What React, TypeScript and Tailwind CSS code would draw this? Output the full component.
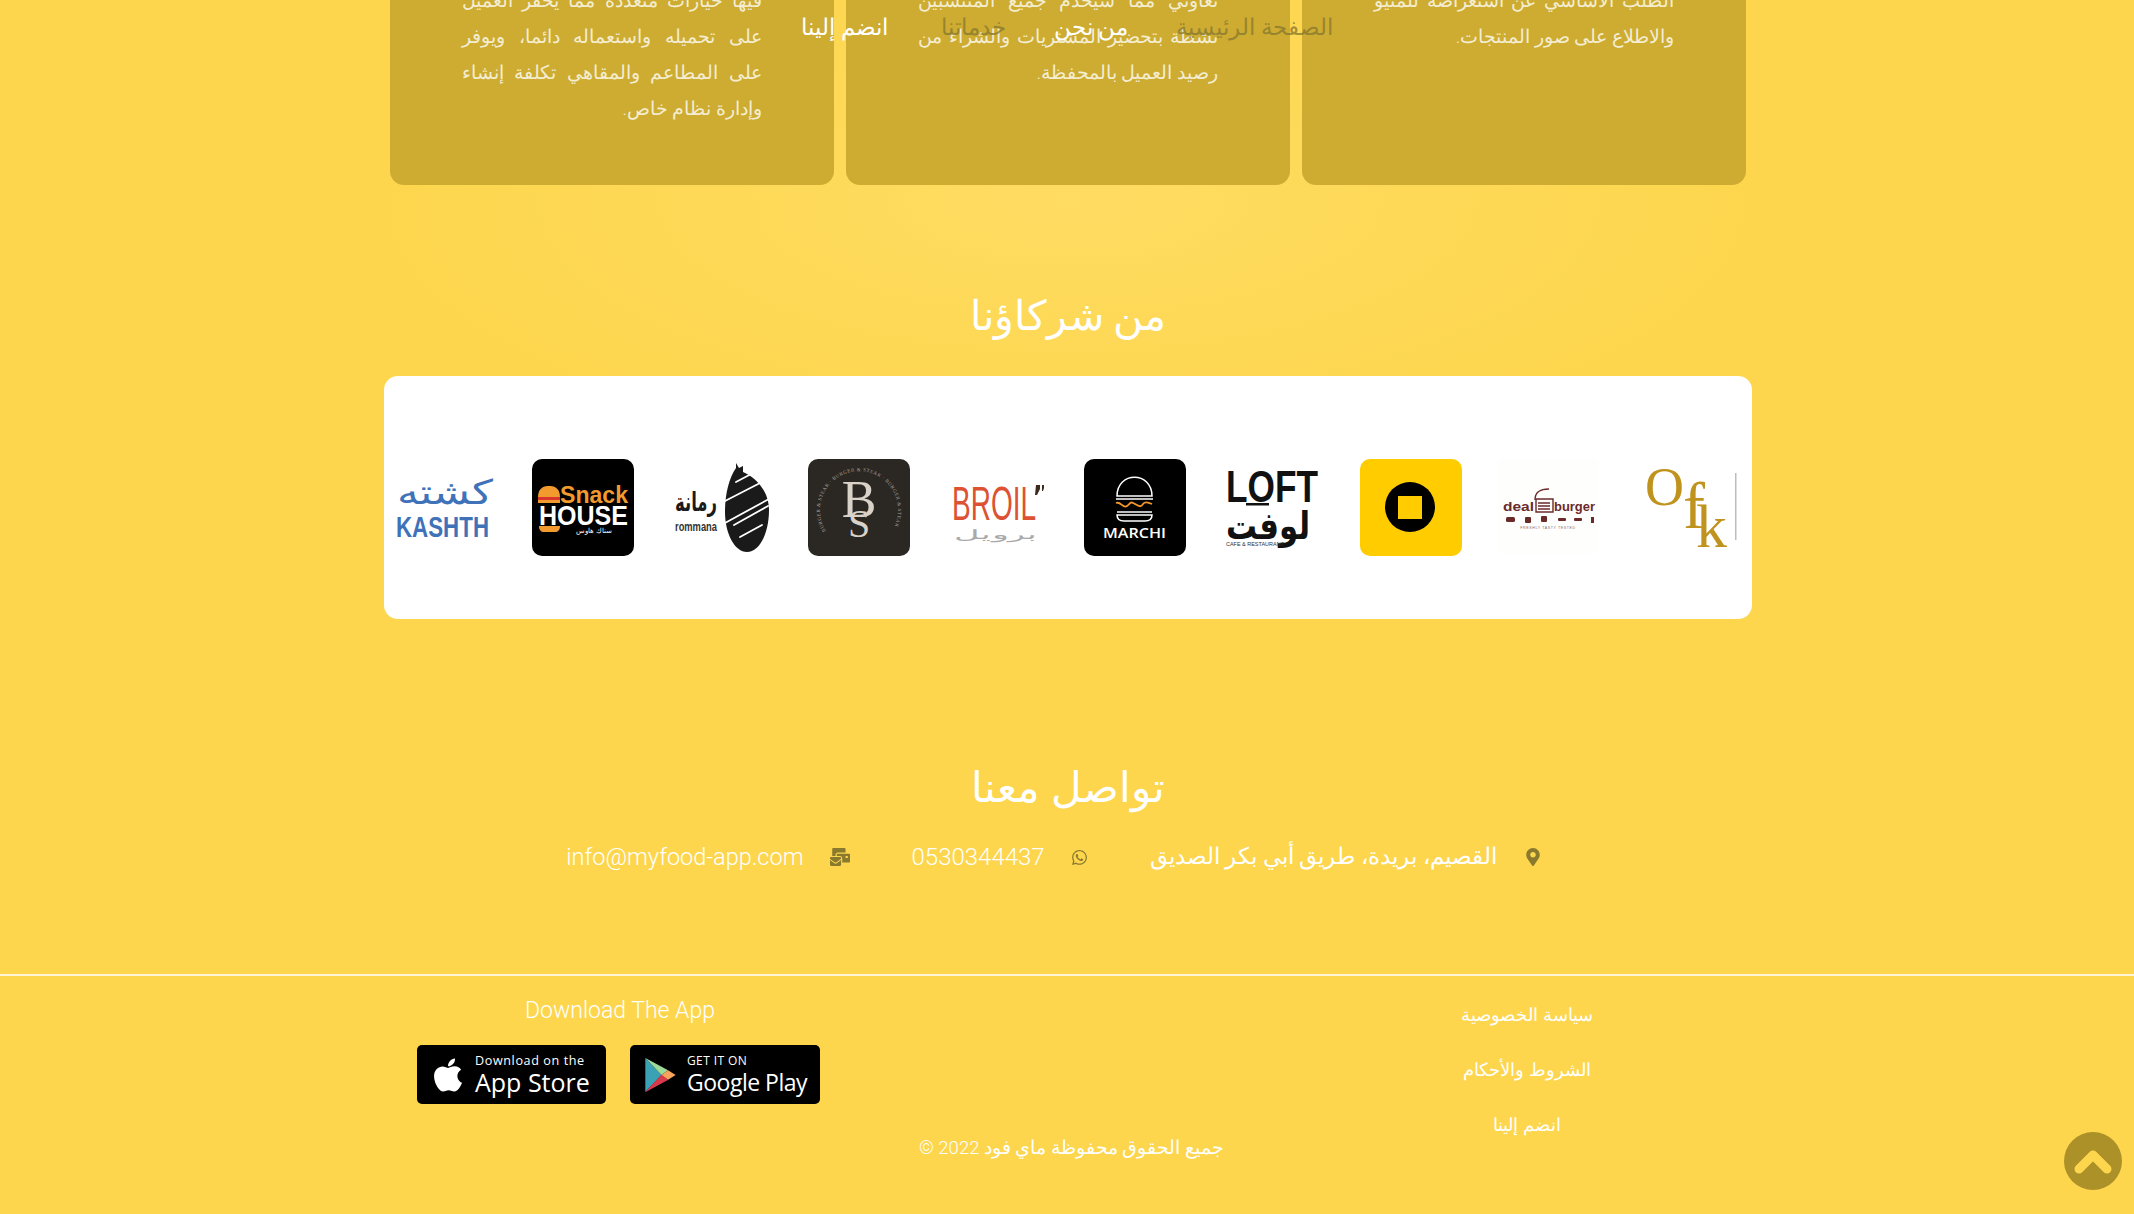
import { FaApple, FaMailBulk, FaMapMarkerAlt, FaWhatsapp } from "react-icons/fa";

const navItems = [
    { label: "الصفحة الرئيسية", active: false },
    { label: "من نحن", active: true },
    { label: "خدماتنا", active: false },
    { label: "انضم إلينا", active: true },
];

const cards = [
    ["الطلب الأساسي عن استعراضه للمنيو", "والاطلاع على صور المنتجات."],
    ["تعاوني مما سيخدم جميع المنتسبين", "نشطة بتحضير المشتريات والشراء من", "رصيد العميل بالمحفظة."],
    ["فيها خيارات متعددة مما يحفز العميل", "على تحميله واستعماله دائما، ويوفر", "على المطاعم والمقاهي تكلفة إنشاء", "وإدارة نظام خاص."],
];

const footerLinks = ["سياسة الخصوصية", "الشروط والأحكام", "انضم إلينا"];

function Kashth() {
    return (
        <svg viewBox="0 0 102 97" className="h-full w-full">
            <text x="51" y="45" textAnchor="middle" fontSize="34" fill="#3f72b8" fontFamily="DejaVu Sans" textLength="96" lengthAdjust="spacingAndGlyphs">كشته</text>
            <text x="2" y="78" fontSize="30" fontWeight="700" fill="#3f72b8" fontFamily="Liberation Sans" textLength="93" lengthAdjust="spacingAndGlyphs">KASHTH</text>
        </svg>
    );
}

function SnackHouse() {
    return (
        <svg viewBox="0 0 102 97" className="h-full w-full">
            <rect width="102" height="97" rx="10" fill="#000" />
            <path d="M6 38c0-10 7-11 11-11s11 1 11 11z" fill="#f29a2e" />
            <rect x="6" y="38" width="22" height="3" fill="#d9352a" />
            <rect x="6" y="41" width="22" height="3" fill="#f29a2e" />
            <text x="28" y="44" fontSize="24" fontWeight="700" fill="#f29a2e" fontFamily="Liberation Sans" textLength="68" lengthAdjust="spacingAndGlyphs">Snack</text>
            <text x="7" y="66" fontSize="28" fontWeight="700" fill="#fff" fontFamily="Liberation Sans" textLength="89" lengthAdjust="spacingAndGlyphs">HOUSE</text>
            <path d="M7 67h21c0 4-2 6-5 6H12c-3 0-5-2-5-6z" fill="#f29a2e" />
            <text x="62" y="74" textAnchor="middle" fontSize="6.5" fill="#fff" fontFamily="DejaVu Sans">سناك هاوس</text>
        </svg>
    );
}

function Rommana() {
    return (
        <svg viewBox="0 0 102 97" className="h-full w-full">
            <text x="26" y="52" textAnchor="middle" fontSize="26" fontWeight="700" fill="#1a1a1a" fontFamily="DejaVu Sans" textLength="42" lengthAdjust="spacingAndGlyphs">رمانة</text>
            <text x="5" y="72" fontSize="12" fontWeight="700" fill="#333" fontFamily="Liberation Sans" textLength="42" lengthAdjust="spacingAndGlyphs">rommana</text>
            <path d="M66 4l3 5 4-2 0 6c14 6 26 20 26 38 0 24-10 42-22 42-12 0-22-18-22-40 0-18 4-34 11-44z" fill="#1a1a1a" />
            <g stroke="#fff" strokeWidth="1.8" strokeLinecap="round">
                <path d="M66 23l17-9" />
                <path d="M55 42l37-19" />
                <path d="M55 64l44-24" />
                <path d="M64 66l34-19" />
                <path d="M70 78l22-12" />
            </g>
        </svg>
    );
}

function BurgerSteak() {
    return (
        <svg viewBox="0 0 102 97" className="h-full w-full">
            <rect width="102" height="97" rx="10" fill="#2b2723" />
            <path id="bs-ring" d="M18 72A39 39 0 1 1 84 72" fill="none" />
            <text fontSize="5" fill="#a8a29a" fontFamily="Liberation Serif" letterSpacing="0.5">
                <textPath href="#bs-ring">BURGER &amp; STEAK · BURGER &amp; STEAK · BURGER &amp; STEAK</textPath>
            </text>
            <text x="51" y="58" textAnchor="middle" fontSize="52" fill="#d8d2c8" fontFamily="Liberation Serif">B</text>
            <text x="51" y="78" textAnchor="middle" fontSize="40" fill="#d8d2c8" fontFamily="Liberation Serif">S</text>
        </svg>
    );
}

function Broil() {
    return (
        <svg viewBox="0 0 102 97" className="h-full w-full">
            <text x="6" y="61" fontSize="48" fill="#dc5233" fontFamily="Liberation Sans" textLength="84" lengthAdjust="spacingAndGlyphs">BROIL</text>
            <path d="M90 26h4v4l-3 6h-2zM96 26h2v3l-1 3h-1z" fill="#3a2a20" />
            <text x="50" y="80" textAnchor="middle" fontSize="13" fill="#a9a9a9" fontFamily="DejaVu Sans" textLength="84" lengthAdjust="spacingAndGlyphs">برويل</text>
        </svg>
    );
}

function Marchi() {
    return (
        <svg viewBox="0 0 102 97" className="h-full w-full">
            <rect width="102" height="97" rx="10" fill="#000" />
            <g fill="none" stroke="#fff" strokeWidth="1.5">
                <path d="M33 37c0-25 35-25 35 0z" />
                <path d="M32 40h37" />
                <path d="M33 53h35" />
                <path d="M33 56h35c0 5-3 6-7 6H40c-4 0-7-1-7-6z" />
            </g>
            <path d="M32 44c5-2 7 6 11 3s3-5 8-2 6 3 8 0 5-2 9 0" fill="none" stroke="#f2962b" strokeWidth="1.8" />
            <text x="19" y="79" fontSize="15" fontWeight="600" fill="#fff" fontFamily="Open Sans" textLength="63" lengthAdjust="spacingAndGlyphs">MARCHI</text>
        </svg>
    );
}

function Loft() {
    return (
        <svg viewBox="0 0 102 97" className="h-full w-full">
            <text x="4" y="43" fontSize="44" fontWeight="700" fill="#111" fontFamily="Liberation Sans" textLength="92" lengthAdjust="spacingAndGlyphs">LOFT</text>
            <rect x="24" y="44" width="23" height="2.5" fill="#111" />
            <text x="46" y="80" textAnchor="middle" fontSize="38" fontWeight="700" fill="#111" fontFamily="DejaVu Sans" textLength="84" lengthAdjust="spacingAndGlyphs">لوفت</text>
            <text x="4" y="87" fontSize="5.5" fill="#333" fontFamily="Liberation Sans" textLength="58">CAFE &amp; RESTAURANT</text>
        </svg>
    );
}

function YellowLogo() {
    return (
        <svg viewBox="0 0 102 97" className="h-full w-full">
            <rect width="102" height="97" rx="10" fill="#ffcc00" />
            <circle cx="50" cy="48" r="25" fill="#000" />
            <rect x="38" y="37" width="24" height="23" fill="#ffcc00" />
        </svg>
    );
}

function DealBurger() {
    return (
        <svg viewBox="0 0 102 97" className="h-full w-full">
            <rect width="100" height="95" fill="#fefefd" />
            <g fill="none" stroke="#6b2a2a" strokeWidth="1.4">
                <path d="M37 41c0-9 6-11 14-11" />
                <path d="M38 40h17v13H38z" />
                <path d="M40 44h12M40 47h12M40 50h12" />
            </g>
            <text x="5" y="52" fontSize="13" fontWeight="700" fill="#6b2a2a" fontFamily="Liberation Sans" textLength="31" lengthAdjust="spacingAndGlyphs">deal</text>
            <text x="56" y="52" fontSize="13" fontWeight="700" fill="#6b2a2a" fontFamily="Liberation Sans" textLength="41" lengthAdjust="spacingAndGlyphs">burger</text>
            <g fill="#6b2a2a">
                <rect x="8" y="58" width="9" height="5" rx="1.5" />
                <rect x="27" y="58" width="6" height="6" rx="1" />
                <rect x="43" y="57" width="6" height="6" rx="1" />
                <rect x="60" y="59" width="8" height="3" rx="1" />
                <rect x="76" y="59" width="8" height="3" rx="1" />
                <rect x="93" y="58" width="3" height="6" />
            </g>
            <text x="50" y="70" textAnchor="middle" fontSize="3.6" fill="#8a6a6a" fontFamily="Liberation Sans" letterSpacing="0.6">FRESHLY TASTY TESTED</text>
        </svg>
    );
}

function Ofk() {
    return (
        <svg viewBox="0 0 102 97" className="h-full w-full">
            <text x="9" y="46" fontSize="54" fill="#c0931f" fontFamily="Liberation Serif">O</text>
            <text x="47" y="69" fontSize="66" fill="#c0931f" fontFamily="Liberation Serif">f</text>
            <text x="60" y="88" fontSize="62" fill="#c0931f" fontFamily="Liberation Serif">k</text>
            <rect x="99" y="14" width="1.5" height="67" fill="#bdbdbd" />
        </svg>
    );
}

const logos = [Kashth, SnackHouse, Rommana, BurgerSteak, Broil, Marchi, Loft, YellowLogo, DealBurger, Ofk];

function PlayIcon() {
    return (
        <svg viewBox="0 0 34 38" className="h-[36px] w-[33px]">
            <path d="M1 1l17 18L1 37z" fill="#3aa2b4" />
            <path d="M1 1l24 13-7 5z" fill="#9ddb9a" />
            <path d="M1 37l24-13-7-5z" fill="#b8326f" />
            <path d="M25 14l8 5-8 5-7-5z" fill="#f7a35c" />
            <path d="M18 19l7 5-24 13z" fill="#d93a4a" />
        </svg>
    );
}

export default function App() {
    return (
        <div className="relative h-[1214px] w-full overflow-hidden bg-[#fdd64d] bg-[radial-gradient(ellipse_700px_260px_at_50%_200px,#ffdc62,transparent)] font-['Roboto','DejaVu_Sans',sans-serif] font-light text-white">
            <nav dir="rtl" className="absolute left-0 top-[10px] z-10 flex w-full justify-center gap-12 text-[23px] leading-[36px]">
                {navItems.map((item) => (
                    <a key={item.label} className={item.active ? "text-white last:mr-[5px]" : "text-[#8a7a2e]/80"}>
                        {item.label}
                    </a>
                ))}
            </nav>

            <div dir="rtl" className="flex h-[185px] justify-center gap-3 pl-[2px]">
                {cards.map((lines, i) => (
                    <div key={i} className="h-full w-[444px] overflow-hidden rounded-b-[14px] bg-[#cdac31] px-[72px] text-[18.7px] leading-[36px] text-[#f4edd2]">
                        <div className="-mt-[17px]">
                            {lines.map((line, j) => (
                                <p key={j} className={j < lines.length - 1 ? "whitespace-nowrap [text-align-last:justify]" : "whitespace-nowrap"}>
                                    {line}
                                </p>
                            ))}
                        </div>
                    </div>
                ))}
            </div>

            <h2 dir="rtl" className="mt-[98px] pl-[2px] text-center text-[41px] leading-[66px]">من شركاؤنا</h2>

            <div className="ml-[384px] mt-[27px] flex h-[243px] w-[1368px] items-center rounded-[14px] bg-white px-[10px] pt-[20px]">
                <div className="flex h-[97px] w-[1344px] gap-[36px] overflow-hidden">
                    {logos.map((Logo, i) => (
                        <div key={i} className="h-[97px] w-[102px] shrink-0">
                            <Logo />
                        </div>
                    ))}
                </div>
            </div>

            <h2 dir="rtl" className="mt-[136px] pl-[2px] text-center text-[42px] leading-[66px]">تواصل معنا</h2>

            <div dir="rtl" className="mt-[16px] flex items-center justify-center gap-[62px] pr-[28px] text-[23.5px] leading-[40px]">
                <div className="flex items-center gap-[29px]">
                    <FaMapMarkerAlt className="h-[18px] w-[14px] text-[#8a7a2e]" />
                    <span className="text-[23px]">القصيم، بريدة، طريق أبي بكر الصديق</span>
                </div>
                <div className="flex items-center gap-[26px]">
                    <FaWhatsapp className="h-[17px] w-[17px] text-[#8a7a2e]" />
                    <span className="text-[24px]">0530344437</span>
                </div>
                <div className="flex items-center gap-[26px]">
                    <FaMailBulk className="h-[20px] w-[20px] text-[#8a7a2e]" />
                    <span>info@myfood-app.com</span>
                </div>
            </div>

            <div className="mt-[97px] h-[2px] w-full bg-[#fff6d8]" />

            <footer className="flex pl-[417px] pt-[16px]">
                <div className="w-[403px]">
                    <p className="pl-[3px] text-center text-[23px] leading-[38px]">Download The App</p>
                    <div className="mt-[15px] flex justify-between">
                        <div className="flex h-[59px] w-[189px] items-center gap-[11px] rounded-[5px] bg-black pl-[15px]">
                            <FaApple className="h-[38px] w-[32px] text-white" />
                            <div className="font-['Open_Sans'] font-normal">
                                <p className="text-[12.6px] leading-[15px] tracking-[0.6px]">Download on the</p>
                                <p className="text-[25px] leading-[28px]">App Store</p>
                            </div>
                        </div>
                        <div className="flex h-[59px] w-[190px] items-center gap-[10px] rounded-[5px] bg-black pl-[14px]">
                            <PlayIcon />
                            <div className="font-['Open_Sans'] font-normal">
                                <p className="text-[12px] leading-[14px] tracking-[0.4px]">GET IT ON</p>
                                <p className="text-[23px] leading-[28px] tracking-[-0.5px]">Google Play</p>
                            </div>
                        </div>
                    </div>
                </div>
                <div dir="rtl" className="flex w-[503px] items-end justify-center text-[18.5px] leading-[28px]">
                    <p className="-mb-[23px]">جميع الحقوق محفوظة ماي فود 2022 ©</p>
                </div>
                <div dir="rtl" className="flex w-[408px] flex-col items-center gap-[27px] pt-[9px] text-[18px] leading-[28px]">
                    {footerLinks.map((link) => (
                        <a key={link}>{link}</a>
                    ))}
                </div>
            </footer>

            <button className="absolute left-[2064px] top-[1132px] z-10 flex h-[58px] w-[58px] items-center justify-center rounded-full bg-[#ac9028]">
                <svg viewBox="0 0 38 25" className="h-[25px] w-[38px]" fill="none" stroke="#fdd64d" strokeWidth="9" strokeLinecap="round" strokeLinejoin="round">
                    <polyline points="5,20 19,6 33,20" />
                </svg>
            </button>
        </div>
    );
}
